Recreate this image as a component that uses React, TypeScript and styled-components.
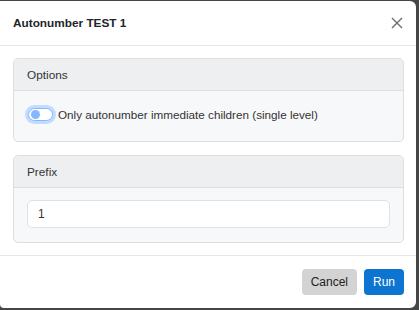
import React, { useState } from 'react';
import { styled, createGlobalStyle } from 'styled-components';

const GlobalStyle = createGlobalStyle`
  html, body {
    margin: 0;
    padding: 0;
    background: #464646;
    font-family: "Liberation Sans", Arial, sans-serif;
  }
`;

const Screen = styled.div`
  width: 419px;
  height: 310px;
  padding-top: 1px;
  box-sizing: border-box;
  overflow: hidden;
`;

const Dialog = styled.div`
  width: 416px;
  height: 307px;
  background: #ffffff;
  border-radius: 0 6px 6px 4px;
  display: flex;
  flex-direction: column;
  color: #212529;
`;

const Header = styled.div`
  height: 44px;
  display: flex;
  align-items: center;
  justify-content: space-between;
  padding: 0 11px 0 13px;
  border-bottom: 1px solid #e6e7e9;
`;

const Title = styled.h5`
  margin: 0;
  font-size: 11.8px;
  font-weight: 700;
  color: #212529;
`;

const CloseButton = styled.button`
  border: none;
  background: none;
  padding: 0;
  width: 16px;
  height: 16px;
  display: flex;
  align-items: center;
  justify-content: center;
  cursor: pointer;
`;

const Body = styled.div`
  flex: 1;
  padding: 12px 12px 0 13px;
  display: flex;
  flex-direction: column;
  gap: 13px;
`;

const Card = styled.div`
  border: 1px solid #dcdee1;
  border-radius: 5px;
  background: #f7f8fa;
  overflow: hidden;
`;

const CardHeader = styled.div`
  height: 31px;
  padding: 0 13px;
  display: flex;
  align-items: center;
  background: #eeeff1;
  border-bottom: 1px solid #dcdee1;
  font-size: 11.8px;
  color: #333;
`;

const CardBody = styled.div<{ $pad: string }>`
  padding: ${(p) => p.$pad};
  display: flex;
  align-items: center;
  gap: 5px;
`;

const Switch = styled.button<{ $on: boolean }>`
  width: 25px;
  height: 13px;
  border-radius: 8px;
  border: 1px solid #86b7fe;
  background: #ffffff;
  box-shadow: 0 0 0 3px #c2dbfe;
  padding: 0 2px;
  display: flex;
  align-items: center;
  justify-content: ${(p) => (p.$on ? 'flex-end' : 'flex-start')};
  cursor: pointer;
  margin-left: 1px;
`;

const Knob = styled.span`
  width: 9px;
  height: 9px;
  border-radius: 50%;
  background: #86b7fe;
`;

const CheckLabel = styled.span`
  font-size: 11.7px;
  color: #333;
`;

const Input = styled.input`
  width: 100%;
  height: 28px;
  box-sizing: border-box;
  border: 1px solid #dee2e6;
  border-radius: 5px;
  padding: 0 10px;
  font-family: inherit;
  font-size: 12px;
  color: #333;
  background: #fff;
  outline: none;
`;

const Footer = styled.div`
  height: 51px;
  border-top: 1px solid #e6e7e9;
  display: flex;
  align-items: center;
  justify-content: flex-end;
  gap: 7px;
  padding: 0 12px 0 0;
  margin-bottom: 1px;
`;

const Button = styled.button<{ $variant: 'primary' | 'secondary' }>`
  height: 26px;
  border: none;
  border-radius: 4px;
  padding: 0 9px;
  font-family: inherit;
  font-size: 12px;
  cursor: pointer;
  background: ${(p) => (p.$variant === 'primary' ? '#0b75d1' : '#d3d3d3')};
  color: ${(p) => (p.$variant === 'primary' ? '#ffffff' : '#222')};
`;

export default function App() {
  const [single, setSingle] = useState(false);
  const [prefix, setPrefix] = useState('1');

  return (
    <Screen>
      <GlobalStyle />
      <Dialog>
        <Header>
          <Title>Autonumber TEST 1</Title>
          <CloseButton aria-label="Close">
            <svg width="12" height="12" viewBox="0 0 12 12">
              <path d="M1 1 L11 11 M11 1 L1 11" stroke="#6c6c6c" strokeWidth="1.4" />
            </svg>
          </CloseButton>
        </Header>
        <Body>
          <Card>
            <CardHeader>Options</CardHeader>
            <CardBody $pad="17px 13px 20px">
              <Switch $on={single} onClick={() => setSingle(!single)}>
                <Knob />
              </Switch>
              <CheckLabel>Only autonumber immediate children (single level)</CheckLabel>
            </CardBody>
          </Card>
          <Card>
            <CardHeader>Prefix</CardHeader>
            <CardBody $pad="12px 13px 14px">
              <Input value={prefix} onChange={(e) => setPrefix(e.target.value)} />
            </CardBody>
          </Card>
        </Body>
        <Footer>
          <Button $variant="secondary">Cancel</Button>
          <Button $variant="primary">Run</Button>
        </Footer>
      </Dialog>
    </Screen>
  );
}
